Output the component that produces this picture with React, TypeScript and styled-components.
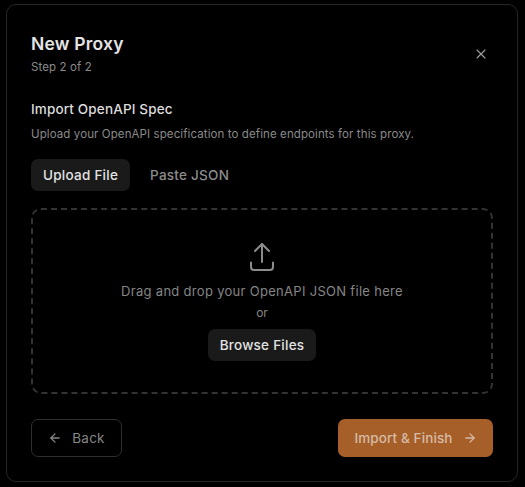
import { createGlobalStyle } from "styled-components"
import styled from "styled-components"
import { ArrowLeft, ArrowRight, X } from "lucide-react"

const GlobalStyle = createGlobalStyle`
    html, body {
        margin: 0;
        padding: 0;
        background: #000;
    }
    * {
        box-sizing: border-box;
    }
`

const Page = styled.div`
    width: 525px;
    height: 487px;
    padding: 4px 6px 5px 6px;
    background: #000;
    font-family: Inter, "Liberation Sans", sans-serif;
`

const Dialog = styled.div`
    height: 478px;
    width: 512px;
    border: 1px solid #262626;
    border-radius: 10px;
    padding: 24px;
    display: flex;
    flex-direction: column;
`

const Header = styled.div`
    display: flex;
    justify-content: space-between;
    align-items: center;
    height: 46px;
    margin-top: 2px;
`

const Title = styled.h2`
    margin: 0;
    font-size: 17.5px;
    line-height: 26px;
    font-weight: 600;
    letter-spacing: 0.2px;
    color: #e4e4e4;
`

const Step = styled.p`
    margin: 0;
    font-size: 11.5px;
    line-height: 20px;
    letter-spacing: 0.1px;
    color: #8a8a8a;
`

const CloseButton = styled.button`
    border: 0;
    background: none;
    padding: 0;
    margin-right: 4px;
    margin-top: -1px;
    display: flex;
    color: #a0a0a0;
`

const SectionTitle = styled.h3`
    margin: 22px 0 0;
    font-size: 13.5px;
    line-height: 20px;
    font-weight: 500;
    letter-spacing: 0.15px;
    color: #dcdcdc;
`

const Description = styled.p`
    margin: 5px 0 0;
    font-size: 11.5px;
    line-height: 20px;
    letter-spacing: 0.1px;
    color: #8a8a8a;
`

const Tabs = styled.div`
    display: flex;
    gap: 8px;
    margin-top: 15px;
`

const Tab = styled.button<{ $active?: boolean }>`
    height: 32px;
    padding: 0 12px;
    border: 0;
    border-radius: 7px;
    background: ${(p) => (p.$active ? "#1a1a1a" : "transparent")};
    color: ${(p) => (p.$active ? "#e2e2e2" : "#8c8c8c")};
    font-family: inherit;
    font-size: 13.5px;
    font-weight: 450;
    letter-spacing: 0.25px;
`

const DropZone = styled.div`
    margin-top: 17px;
    height: 186px;
    border: 2px dashed #333;
    border-radius: 10px;
    display: flex;
    flex-direction: column;
    align-items: center;
    padding-top: 32px;
`

const DropIcon = styled.svg`
    display: block;
    fill: none;
    stroke: #8c8c8c;
    stroke-width: 2;
    stroke-linecap: round;
    stroke-linejoin: round;
`

const DropText = styled.p`
    margin: 9px 0 0;
    font-size: 13px;
    line-height: 20px;
    letter-spacing: 0.3px;
    color: #858585;
`

const OrText = styled.p`
    margin: 2px 0 0;
    font-size: 12px;
    line-height: 20px;
    color: #858585;
`

const BrowseButton = styled.button`
    margin-top: 6px;
    height: 32px;
    width: 108px;
    padding: 0;
    border: 0;
    border-radius: 7px;
    background: #1a1a1a;
    color: #e2e2e2;
    font-family: inherit;
    font-size: 13.5px;
    font-weight: 450;
    letter-spacing: 0.25px;
`

const Footer = styled.div`
    display: flex;
    justify-content: space-between;
    margin-top: 25px;
`

const BackButton = styled.button`
    height: 38px;
    width: 91px;
    padding: 0;
    display: flex;
    align-items: center;
    justify-content: center;
    gap: 10px;
    border: 1px solid #2e2e2e;
    border-radius: 7px;
    background: transparent;
    color: #858585;
    font-family: inherit;
    font-size: 13.5px;
    font-weight: 400;
    letter-spacing: 0.2px;
`

const FinishButton = styled.button`
    height: 38px;
    width: 155px;
    padding: 0;
    display: flex;
    align-items: center;
    justify-content: center;
    gap: 10px;
    border: 0;
    border-radius: 7px;
    background: #a65f28;
    color: #d6bba6;
    font-family: inherit;
    font-size: 13.5px;
    font-weight: 450;
    letter-spacing: 0.1px;
`

export default function App() {
    return (
        <Page>
            <GlobalStyle />
            <Dialog>
                <Header>
                    <div>
                        <Title>New Proxy</Title>
                        <Step>Step 2 of 2</Step>
                    </div>
                    <CloseButton><X size={16} strokeWidth={1.7} /></CloseButton>
                </Header>
                <SectionTitle>Import OpenAPI Spec</SectionTitle>
                <Description>Upload your OpenAPI specification to define endpoints for this proxy.</Description>
                <Tabs>
                    <Tab $active>Upload File</Tab>
                    <Tab>Paste JSON</Tab>
                </Tabs>
                <DropZone>
                    <DropIcon width="26" height="30" viewBox="0 0 26 30">
                        <path d="M2 20.5v4.5a3 3 0 0 0 3 3h16a3 3 0 0 0 3-3v-4.5" />
                        <path d="M6 9l7-7 7 7" />
                        <path d="M13 2v18" />
                    </DropIcon>
                    <DropText>Drag and drop your OpenAPI JSON file here</DropText>
                    <OrText>or</OrText>
                    <BrowseButton>Browse Files</BrowseButton>
                </DropZone>
                <Footer>
                    <BackButton><ArrowLeft size={14} strokeWidth={2.2} />Back</BackButton>
                    <FinishButton>Import &amp; Finish<ArrowRight size={14} strokeWidth={2.2} /></FinishButton>
                </Footer>
            </Dialog>
        </Page>
    )
}
